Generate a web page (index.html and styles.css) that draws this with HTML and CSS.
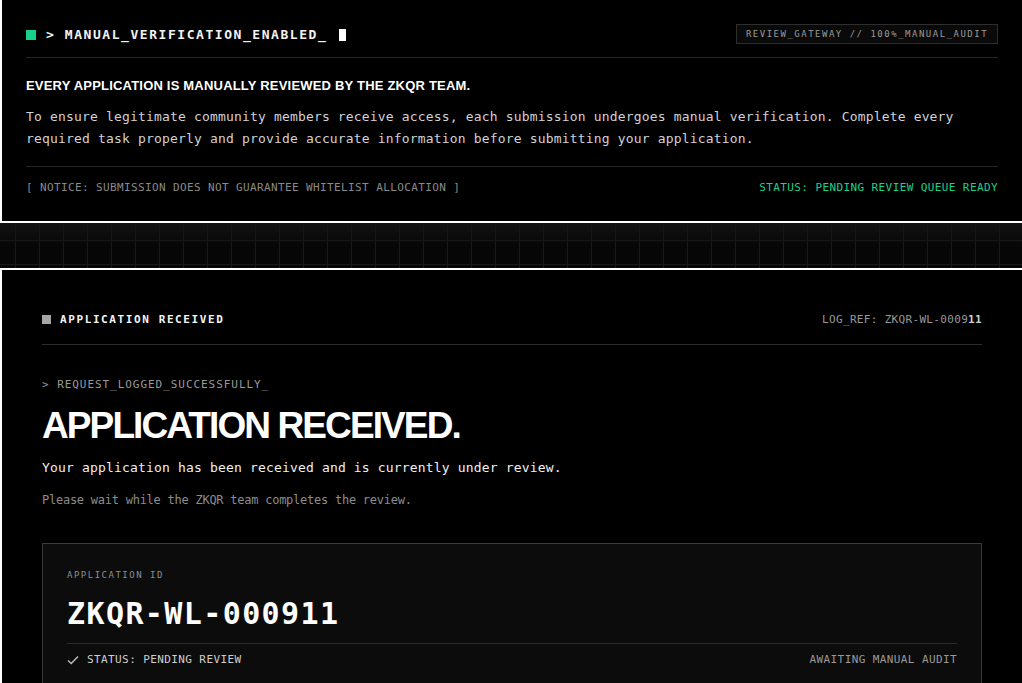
FILE: index.html
```html
<!DOCTYPE html>
<html lang="en">
<head>
<meta charset="utf-8">
<title>ZKQR Review</title>
<link rel="stylesheet" href="styles.css">
</head>
<body>
<div class="page">
  <section class="panel notice-panel">
    <div class="term-head">
      <div class="term-title">
        <span class="dot-green"></span>
        <span class="term-text">&gt; MANUAL_VERIFICATION_ENABLED_</span>
        <span class="cursor"></span>
      </div>
      <div class="badge">REVIEW_GATEWAY // 100%_MANUAL_AUDIT</div>
    </div>
    <hr class="rule">
    <h2 class="lead">EVERY APPLICATION IS MANUALLY REVIEWED BY THE ZKQR TEAM.</h2>
    <p class="body-copy">To ensure legitimate community members receive access, each submission undergoes manual verification. Complete every required task properly and provide accurate information before submitting your application.</p>
    <hr class="rule rule-2">
    <div class="foot-row">
      <span class="notice">[ NOTICE: SUBMISSION DOES NOT GUARANTEE WHITELIST ALLOCATION ]</span>
      <span class="status-green">STATUS: PENDING REVIEW QUEUE READY</span>
    </div>
  </section>

  <div class="grid-band"></div>

  <section class="panel result-panel">
    <div class="result-head">
      <div class="result-title">
        <span class="dot-gray"></span>
        <span>APPLICATION RECEIVED</span>
      </div>
      <div class="log-ref">LOG_REF: ZKQR-WL-0009<b>11</b></div>
    </div>
    <hr class="rule rule-dim">
    <div class="logged">&gt; REQUEST_LOGGED_SUCCESSFULLY_</div>
    <h1 class="big-title">APPLICATION RECEIVED.</h1>
    <p class="sub">Your application has been received and is currently under review.</p>
    <p class="wait">Please wait while the ZKQR team completes the review.</p>

    <div class="card">
      <div class="card-label">APPLICATION ID</div>
      <div class="card-id">ZKQR-WL-000911</div>
      <hr class="rule card-rule">
      <div class="card-foot">
        <span class="card-status">
          <svg class="check" width="12" height="10" viewBox="0 0 12 10"><polyline points="1,5.5 4.2,8.5 11,1.5" fill="none" stroke="#bdbdbd" stroke-width="1.4"/></svg>
          STATUS: PENDING REVIEW
        </span>
        <span class="card-await">AWAITING MANUAL AUDIT</span>
      </div>
    </div>
  </section>
</div>
</body>
</html>
```

FILE: styles.css
```css
html, body {
  margin: 0;
  padding: 0;
  background: #000;
  overflow: hidden;
}
body {
  font-family: "DejaVu Sans Mono", "Liberation Mono", monospace;
  color: #fff;
}
.page {
  width: 1024px;
}
.panel {
  border: 2px solid #fff;
  background: #000;
}
.notice-panel {
  margin-top: -2px;
  padding: 25px 24px 25px;
}
.term-head {
  display: flex;
  justify-content: space-between;
  align-items: center;
  height: 20px;
}
.term-title {
  display: flex;
  align-items: center;
}
.dot-green {
  width: 10px;
  height: 10px;
  background: #18d18c;
  margin-right: 10px;
}
.term-text {
  font-size: 13px;
  font-weight: 600;
  letter-spacing: 1.55px;
  line-height: 16px;
  color: #f2f2f2;
}
.cursor {
  width: 7px;
  height: 12px;
  background: #fff;
  margin-left: 12px;
}
.badge {
  box-sizing: border-box;
  height: 20px;
  width: 262px;
  margin-top: -2px;
  border: 1px solid #2e2e2e;
  background: #0a0a0a;
  color: #9a9a9a;
  font-size: 9px;
  letter-spacing: 1.5px;
  line-height: 18px;
  text-align: center;
}
.rule {
  border: 0;
  height: 1px;
  background: #242424;
  margin: 12px 0 0;
}
.lead {
  font-family: "Liberation Sans", Arial, sans-serif;
  font-weight: 700;
  font-size: 13px;
  letter-spacing: 0.2px;
  line-height: 18px;
  margin: 19px 0 0;
  color: #fff;
}
.body-copy {
  font-size: 13px;
  letter-spacing: 0.17px;
  line-height: 22px;
  color: #d2d2d2;
  margin: 11px 0 0;
}
.rule-2 {
  margin-top: 16px;
}
.foot-row {
  display: flex;
  justify-content: space-between;
  align-items: center;
  margin-top: 13px;
  line-height: 16px;
  font-size: 11px;
}
.notice {
  color: #8a8a8a;
  letter-spacing: 0.38px;
}
.status-green {
  color: #1bd18b;
  letter-spacing: 0.4px;
}
.grid-band {
  height: 45px;
  background-color: #060606;
  background-image:
    linear-gradient(to bottom, rgba(20,20,20,0.9), rgba(0,0,0,0) 24px),
    linear-gradient(to right, #191919 1px, transparent 1px),
    linear-gradient(to bottom, #191919 1px, transparent 1px);
  background-size: 100% 100%, 24px 24px, 24px 24px;
  background-position: 0 0, 15px 0, 0 17px;
}
.result-panel {
  padding: 39px 40px 40px;
}
.result-head {
  display: flex;
  justify-content: space-between;
  align-items: center;
  height: 20px;
}
.result-title {
  display: flex;
  align-items: center;
  font-size: 11px;
  font-weight: 600;
  letter-spacing: 1.6px;
  color: #f4f4f4;
}
.dot-gray {
  width: 9px;
  height: 9px;
  background: #a6a6a6;
  margin-right: 9px;
}
.log-ref {
  font-size: 11px;
  letter-spacing: 0.33px;
  color: #9a9a9a;
}
.log-ref b {
  color: #cfcfcf;
}
.rule-dim {
  background: #2c2c2c;
  margin-top: 15px;
}
.logged {
  margin-top: 32px;
  font-size: 11px;
  line-height: 16px;
  letter-spacing: 0.95px;
  color: #9a9a9a;
}
.big-title {
  font-family: "Liberation Sans", Arial, sans-serif;
  font-weight: 700;
  font-size: 37px;
  letter-spacing: -1.9px;
  line-height: 44px;
  margin: 11px 0 0;
  color: #fff;
}
.sub {
  margin: 10px 0 0;
  font-size: 13px;
  letter-spacing: 0.17px;
  line-height: 20px;
  color: #f0f0f0;
}
.wait {
  margin: 13px 0 0;
  font-size: 12px;
  letter-spacing: -0.25px;
  line-height: 18px;
  color: #8c8c8c;
}
.card {
  margin-top: 34px;
  border: 1px solid #3a3a3a;
  background: #0c0c0c;
  padding: 24px 24px 20px;
}
.card-label {
  font-size: 9px;
  letter-spacing: 1.5px;
  line-height: 14px;
  color: #8e8e8e;
}
.card-id {
  margin-top: 14px;
  font-size: 30px;
  font-weight: 600;
  letter-spacing: 1.4px;
  line-height: 36px;
  color: #fff;
}
.card-rule {
  margin-top: 11px;
  background: #2a2a2a;
}
.card-foot {
  display: flex;
  justify-content: space-between;
  align-items: center;
  margin-top: 8px;
  line-height: 16px;
  font-size: 11px;
}
.card-status {
  display: flex;
  align-items: center;
  gap: 8px;
  color: #cfcfcf;
  letter-spacing: 0.4px;
}
.check {
  display: block;
}
.card-await {
  color: #9a9a9a;
  letter-spacing: 0.4px;
}
```
